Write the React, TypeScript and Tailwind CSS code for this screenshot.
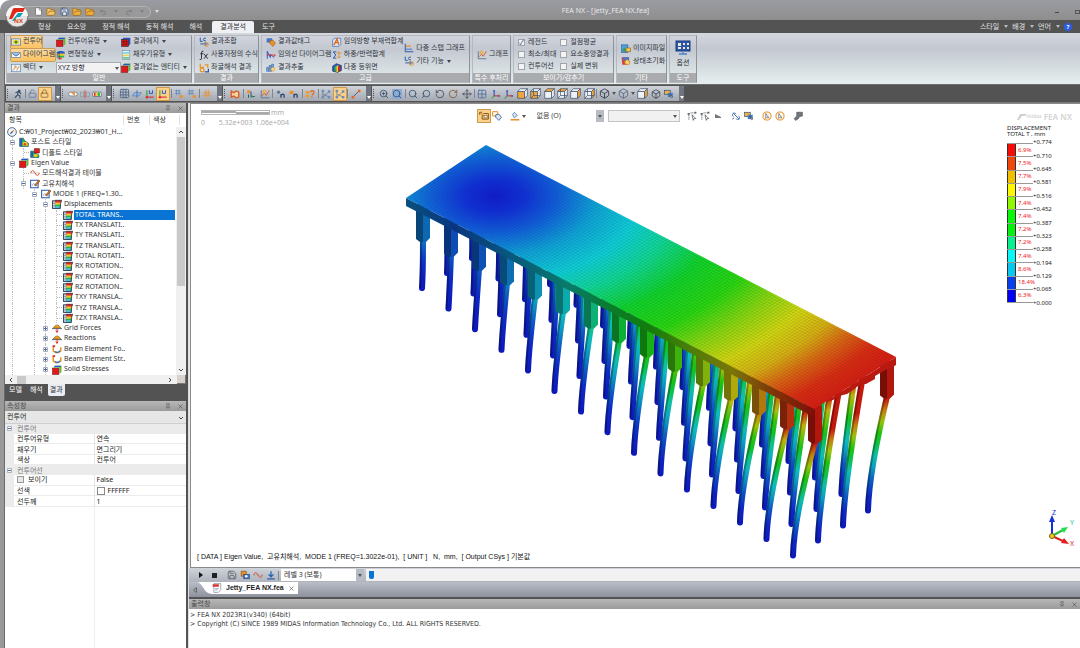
import type { ReactNode } from "react";
import {
  Box,
  File,
  FolderOpen,
  Grid2x2,
  Grid3x3,
  Hash,
  Lock,
  LockOpen,
  Move,
  Pin,
  Redo2,
  RotateCcw,
  RotateCw,
  Save,
  Search,
  Undo2,
  X,
  ZoomIn,
} from "lucide-react";

const INK = "#33506f";
const ORANGE = "#e8912a";

const glyphs: Record<string, ReactNode> = {
  contour: (
    <>
      <rect x="1" y="3" width="14" height="10" fill="#dfe9f5" stroke="#3c6aa0" />
      <ellipse cx="8" cy="8" rx="5" ry="3.5" fill="#f3d21c" />
      <circle cx="8" cy="8" r="2.2" fill="#1d8a36" />
    </>
  ),
  diagram: (
    <>
      <path d="M1 4h14v8H1z" fill="#fff" stroke="#3c6aa0" />
      <path d="M2 5q6 9 12 0" fill="#8fb4e0" stroke="#24508a" />
    </>
  ),
  vector: (
    <>
      <rect x="1" y="2" width="14" height="12" fill="#eef4fb" stroke="#4c78ad" />
      <path d="M3 12 8 5m-3 0h3v3M9 12l4-7" stroke={ORANGE} strokeWidth="1.5" fill="none" />
    </>
  ),
  cube: (
    <>
      <path d="M5 1h10v10l-3 3V4H2z" fill="#2bb24a" />
      <path d="M5 1h10l-1 2H3z" fill="#2854c8" />
      <path d="M14 2h1v9l-1 1z" fill="#f2d21c" />
      <rect x="1" y="5" width="10" height="10" fill="#e01818" stroke="#801010" />
    </>
  ),
  edgeCube: (
    <>
      <path d="M4 1h11v10l-3 3V4H1z" fill="#2854c8" />
      <rect x="1" y="4" width="11" height="11" fill="#e01818" stroke="#1d2b44" />
      <path d="M4.500 4v11M8.500 4v11M1 7.500h11M1 11.500h11" stroke="#701010" />
    </>
  ),
  isoCube: (
    <>
      <path d="m1 5 6-4 8 3v8l-6 3-8-2z" fill="#2854c8" stroke="#1d2b44" />
      <path d="m4 6 3-2v10l-3-1z" fill="#2bb24a" />
      <path d="m7 5 3-2v11l-3 1z" fill="#f2d21c" />
      <path d="m10 6 3-2v8l-3 2z" fill="#e01818" />
    </>
  ),
  deform: (
    <>
      <path d="M2 3q6-3 12 0v3H2z" fill="#2854c8" />
      <path d="M2 6h12v3H3z" fill="#f2c41c" />
      <path d="M3 9h10v3H4z" fill="#2bb24a" />
      <path d="M4 12h5v3H4z" fill="#e04818" />
      <path d="M2 3v10M5 2v12" stroke="#1d2b44" fill="none" />
    </>
  ),
  layers: (
    <>
      <rect x="1" y="3" width="12" height="12" fill="#e8eef6" stroke="#1d3454" strokeWidth="1.600" />
      <path d="M2 7h4M2 11h4M5 4v10" stroke="#4c6488" />
      <path d="M5 2h11l-2 4H5z" fill="#e02818" />
      <path d="M5 6h9l-1 3H5z" fill="#f2c81c" />
      <path d="M5 9h8v3H5z" fill="#2bb24a" />
      <path d="M5 12h8v2H5z" fill="#18b8c8" />
      <path d="M5 2h11l-2 4-1 9" stroke="#1d3454" fill="none" />
    </>
  ),
  fill: (
    <>
      <rect x="2" y="1" width="12" height="14" fill="#fff" stroke="#6888a8" />
      <path d="M3 3h10v3H3z" fill="#72d6e8" />
      <path d="M3 7h10v3H3z" fill="#f4d060" />
      <path d="M3 11h10v3H3z" fill="#60c890" />
    </>
  ),
  loadCase: (
    <>
      <path d="M2 1v6h4M11 2q-4-1-4 2t4 2" stroke="#2854a8" strokeWidth="1.5" fill="none" />
      <path d="M2 11h12M10 8v6" stroke="#4d78b4" strokeWidth="2" />
      <circle cx="12" cy="12" r="3" fill="none" stroke={ORANGE} strokeWidth="1.5" />
    </>
  ),
  fx: (
    <path d="M7 2Q4 1 4 5v9q0 2-3 1M2 6h5M8 6l6 8M14 6 8 14" stroke="#2a3038" strokeWidth="1.5" fill="none" />
  ),
  coord: (
    <>
      <path d="M2 1v6h6M9 3h5v5" stroke={ORANGE} strokeWidth="2" fill="none" />
      <circle cx="5" cy="11" r="3" fill="none" stroke={ORANGE} strokeWidth="2" />
      <path d="M9 14h6V9" stroke="#2854a8" strokeWidth="2" fill="none" />
    </>
  ),
  tag: (
    <>
      <path d="M1 2h9v7H1z" fill="#4176c8" />
      <path d="m6 6 5-1 4 5-4 5-5-5z" fill={ORANGE} stroke="#a45c10" />
    </>
  ),
  pick: (
    <>
      <path d="M1 1h8v7H1z" fill="#fff8ec" stroke={ORANGE} strokeWidth="1.600" />
      <path d="m6 6 5-1 4 5-4 5-5-5z" fill="#dce8f6" stroke="#3c64a0" strokeWidth="1.400" />
    </>
  ),
  lineDiagram: (
    <>
      <path d="M2 14V2l5 10V7l6 5" stroke="#2854c8" strokeWidth="1.5" fill="none" />
      <path d="M1 8h14l-3 3" stroke="#d83030" strokeWidth="1.5" fill="none" />
    </>
  ),
  extract: (
    <>
      <path d="M1 14V7h3v7M5 14V4h3v10M9 14V2h3v7" fill="#7ea4d8" stroke="#3a66a8" />
      <circle cx="11" cy="10" r="3" fill="#f8d890" stroke={ORANGE} />
    </>
  ),
  direction: (
    <>
      <path d="M4 2h10v10l-3 3H1V5z" fill="#dbe8f8" stroke="#2854a8" />
      <path d="M3 13 8 3l3 10M5 9h6" stroke="#d86818" strokeWidth="2" fill="none" />
    </>
  ),
  sigma: (
    <>
      <path d="M7 3H2l4 5-4 5h5" stroke="#2854a8" strokeWidth="1.5" fill="none" />
      <path d="M8 5h7M11 2v11M9 10l2 3 3-3" stroke={ORANGE} strokeWidth="1.5" fill="none" />
    </>
  ),
  stepGraph: (
    <>
      <path d="M2 1v13h13" stroke="#2854a8" strokeWidth="1.5" fill="none" />
      <path d="M3 4h8v2H3z" fill={ORANGE} />
      <path d="M3 9h10v2H3z" fill="#5888d0" />
    </>
  ),
  graph: (
    <>
      <path d="M2 2v12h13" stroke="#5d7796" strokeWidth="1.5" fill="none" />
      <path d="m3 11 4-4 3 3 5-8" stroke="#d85820" strokeWidth="1.5" fill="none" />
      <circle cx="7" cy="4" r="2.5" fill="#f0c060" stroke={ORANGE} />
    </>
  ),
  image: (
    <>
      <rect x="1" y="3" width="10" height="12" fill="#4ba3d8" stroke="#2854a8" />
      <path d="m2 13 3-6 4 6z" fill="#2ba048" />
      <rect x="8" y="8" width="7" height="6" fill="#f2c850" stroke="#906010" />
    </>
  ),
  reset: (
    <>
      <path d="M1 2h12l-3 12H2z" fill="#d84040" />
      <path d="M3 2h10v5H3z" fill="#4878c8" />
      <circle cx="10" cy="10" r="4" fill="#f8c860" stroke="#b87010" />
      <path d="m8 8 4 4" stroke="#fff" />
    </>
  ),
  monitor: (
    <>
      <rect x="1" y="1" width="14" height="10" fill="#2a58b0" stroke="#1d3c78" />
      <path d="M3 3h3v3H3zM8 3h2v2H8zM12 3h2v2h-2zM3 7h3v2H3zM8 7h2v2H8zM12 7h2v2h-2z" fill="#f4e8c8" />
      <path d="M7 11h2v2h3v2H4v-2h3z" fill="#6c90c8" />
    </>
  ),
  walker: (
    <path d="M9 2h2v2H9zM4 6l4-2 3 2 2 2M8 5 7 10l-4 4M7 9l4 2v4" stroke="#38506c" strokeWidth="1.7" fill="none" />
  ),
  barOrange: (
    <>
      <rect x="1" y="5" width="14" height="6" rx="3" fill="#fff" stroke="#5a6470" />
      <path d="M4 5h7v6z" fill={ORANGE} />
    </>
  ),
  barSplit: (
    <>
      <rect x="1" y="5" width="5" height="7" fill="none" stroke="#8b9098" />
      <rect x="10" y="5" width="5" height="7" fill="none" stroke="#8b9098" />
      <path d="M8 2v13" stroke="#d84040" strokeWidth="1.5" />
    </>
  ),
  barRainbow: (
    <>
      <rect x="1" y="5" width="14" height="7" rx="2" fill="#fff" stroke="#3c4c60" />
      <path d="M3 6h3v5H3z" fill="#e03020" />
      <path d="M6 6h3v5H6z" fill="#f2d21c" />
      <path d="M9 6h4v5H9z" fill="#30b040" />
    </>
  ),
  plane: (
    <>
      <path d="M4 6h11l-4 5H1z" fill="#9cc0e8" stroke="#4470a8" />
      <path d="M8 2v12" stroke="#4470a8" strokeWidth="1.5" />
    </>
  ),
  axes: (
    <>
      <path d="M3 2v10" stroke="#30a848" strokeWidth="1.8" fill="none" />
      <path d="M3 13h11" stroke="#d83030" strokeWidth="1.8" />
      <path d="M7 2v5h5V2" stroke="#2854c8" strokeWidth="1.5" fill="none" />
      <circle cx="3" cy="13" r="2" fill="#d83030" />
    </>
  ),
  triad: (
    <>
      <path d="M5 2v9" stroke="#2854c8" strokeWidth="1.8" />
      <path d="M5 11h9" stroke="#d83030" strokeWidth="1.8" />
      <path d="m5 11-4 4" stroke="#30a848" strokeWidth="1.8" />
      <path d="m3 4 2-3 2 3zM12 9l3 2-3 2z" fill="#3c5c98" />
    </>
  ),
  gridLines: (
    <>
      <path d="M1 3h10M1 7h10M4 1v9M8 1v9" stroke="#5f87bd" strokeWidth="1.2" />
      <path d="M9 10h5v4H9z" fill={ORANGE} />
    </>
  ),
  shape: (
    <path d="m2 3 4 3 4-3 4 2v8l-4 1-4-3-4 2z" fill="#f6cfa4" stroke="#d85818" strokeWidth="2" />
  ),
  nodePick: (
    <>
      <rect x="2" y="2" width="5" height="5" fill={ORANGE} />
      <path d="M8 4v8h6M4 9v5" stroke="#30508c" strokeWidth="1.6" fill="none" />
      <circle cx="9" cy="12" r="2" fill="#30a040" />
    </>
  ),
  numberN: (
    <>
      <circle cx="4" cy="5" r="2.6" fill="#5d7796" />
      <path d="M8 14V8m0 2q4-4 5 0v4" stroke="#24416e" strokeWidth="2" fill="none" />
    </>
  ),
  elementN: (
    <>
      <path d="M1 3h6v5H1z" fill={ORANGE} />
      <path d="M8 14V8m0 2q4-4 5 0v4" stroke="#24416e" strokeWidth="2" fill="none" />
    </>
  ),
  query: (
    <>
      <path d="M1 3h6v4H1zM1 9h6v4H1z" fill="#ef9a2c" />
      <path d="M9 5q1-3 4-2t0 5l-2 2M11 12v2" stroke="#d8681c" strokeWidth="2" fill="none" />
    </>
  ),
  network: (
    <>
      <path d="M3 3v10l10-9M3 8l10 5" stroke="#4f6f98" fill="none" />
      <path d="M1 1h4v4H1zM1 11h4v4H1zM11 2h4v4h-4zM11 11h4v4h-4z" fill="#6d8eb8" />
    </>
  ),
  line: (
    <>
      <path d="M3 13 13 3" stroke="#4a5c78" strokeWidth="1.5" />
      <path d="M1 11h4v4H1zM11 1h4v4h-4z" fill="#e06820" />
    </>
  ),
  cursor: (
    <>
      <path d="M3 14V5l3-2h8" stroke="#5c6068" strokeWidth="1.4" strokeDasharray="2 1" fill="none" />
      <path d="M1 3h3v3H1zM12 1h3v3h-3z" fill="#5c6068" />
      <path d="m8 6 6 6-3 .3L10 15z" fill="#fff" stroke="#34383e" />
    </>
  ),
  circleCursor: (
    <>
      <circle cx="8" cy="8" r="6.5" fill="#fff4e4" stroke={ORANGE} strokeWidth="1.6" />
      <path d="M6 4v8l2-2 3 1z" fill="#fff" stroke="#4a5668" />
    </>
  ),
  links: (
    <path d="m3 3 10 10M4 9a3 3 0 1 1 4-4M8 12a3 3 0 1 0 4-4M2 13l3-2" stroke="#3f6ca8" strokeWidth="1.6" fill="none" />
  ),
  frames: (
    <>
      <rect x="1" y="2" width="9" height="7" fill="#f0b040" stroke="#24487c" />
      <path d="M6 6h8v7H6z" fill="#4878c8" />
      <path d="m9 8 5 5-2 1z" fill="#fff" stroke="#333" />
    </>
  ),
  brush: <path d="M6 2h9v6l-5 1-1 3-5 3-2-3 4-4z" fill="#73777c" stroke="#4c4f53" />,
  pour: (
    <>
      <path d="m7 2 5 5-5 4-3-5z" fill="#cfe0f4" stroke="#30609c" />
      <path d="M1 14h14" stroke={ORANGE} strokeWidth="2.5" />
    </>
  ),
  selectBox: (
    <>
      <path d="M1 2h4M1 2v4M7 4h8v9H5V7" fill="none" stroke="#8a5818" strokeWidth="1.600" />
      <rect x="8" y="7" width="5" height="4" fill="#fff" stroke="#6c5028" />
      <path d="m2 3 6 5" stroke="#b46c18" strokeWidth="1.600" />
    </>
  ),
  record: (
    <>
      <path d="M2 2h8v8H2z" fill={ORANGE} stroke="#7c4c10" />
      <rect x="6" y="7" width="9" height="7" fill="#4878c8" stroke="#24487c" />
      <circle cx="10" cy="10" r="2" fill="#fff" />
    </>
  ),
  wave: (
    <>
      <path d="M0 8h16" stroke="#a0a4ac" />
      <path d="M1 8q3-8 7 0t7 0" stroke="#e05030" strokeWidth="1.6" fill="none" />
    </>
  ),
  download: <path d="M8 2v8M4 7l4 4 4-4M2 14h12" stroke="#2460b0" strokeWidth="2" fill="none" />,
  doc: (
    <>
      <path d="M3 1h11v10l-4 4H3z" fill="#fff" stroke="#6d7887" />
      <path d="M1 2h10v4H1z" fill="#d83838" />
      <path d="M5 9h6M5 11h4" stroke="#6d88a8" />
    </>
  ),
  compass: (
    <>
      <circle cx="8" cy="8" r="7" fill="#eef4fa" stroke="#43617f" strokeWidth="1.4" />
      <path d="m12 4-3 5-2-2z" fill="#e07020" />
      <path d="m4 12 3-5 2 2z" fill="#2858a0" />
    </>
  ),
  style: (
    <>
      <path d="M1 2h6l2 4 6 4v5H1z" fill="#2bb24a" stroke="#1c3c70" />
      <path d="M2 3h3v11H2z" fill="#2854c8" />
      <path d="M6 8h6l2 3v3H6z" fill="#f2d21c" />
      <circle cx="9.500" cy="11.500" r="2" fill="#e04020" />
    </>
  ),
  styleDefault: (
    <>
      <path d="M1 5h5l2 3 6 3v4H1z" fill="#2bb24a" stroke="#1c3c70" />
      <path d="M2 6h3v8H2z" fill="#2854c8" />
      <path d="M6 10h6v4H6z" fill="#f2d21c" />
      <path d="M7 1h8v7H7z" fill="#e02020" stroke="#701010" />
    </>
  ),
  edit: (
    <>
      <rect x="1" y="2" width="12" height="12" fill="#fff" stroke="#2854a8" strokeWidth="1.6" />
      <path d="M3 11q3-6 5-2t4 1" stroke="#4878c8" fill="none" />
      <path d="m7 10 7-8 2 1-7 8z" fill="#e87818" stroke="#7c3c08" />
    </>
  ),
  force: (
    <>
      <path d="M2 8q6-10 12 0z" fill="#f2a81c" stroke="#7c5410" />
      <path d="M0 9h16" stroke="#485060" strokeWidth="1.4" />
      <path d="M8 9v6M6 12l2 3 2-3" stroke="#d83020" strokeWidth="1.5" fill="none" />
    </>
  ),
  beam: (
    <>
      <path d="M2 4v7q6 6 12 0V5" stroke={ORANGE} strokeWidth="2.4" fill="none" />
      <path d="M5 12q4 3 8-1" stroke="#2870c8" strokeWidth="2" fill="none" />
      <path d="M1 2h4v3H1z" fill="#d83020" />
    </>
  ),
};

function Glyph({ name, size = 10 }: { name: string; size?: number }) {
  return (
    <svg width={size} height={size} viewBox="0 0 16 16" className="shrink-0" aria-hidden="true">
      {glyphs[name]}
    </svg>
  );
}

function FaceCube({ face }: { face: number }) {
  const fills = ["#eef3fa", "#eef3fa", "#eef3fa"];
  fills[face % 3] = "#f0a83c";
  return (
    <svg width="11" height="11" viewBox="0 0 16 16" stroke="#3c4c68" aria-hidden="true">
      <path d="M1 5h10v10H1z" fill={fills[0]} />
      <path d="m1 5 4-4h10l-4 4z" fill={fills[1]} />
      <path d="m11 5 4-4v10l-4 4z" fill={fills[2]} />
      {face > 2 && <path d="M5 1v10L1 15M5 11h10" fill="none" />}
    </svg>
  );
}

const Caret = ({ className = "text-[#555]" }: { className?: string }) => (
  <svg width="4" height="3" viewBox="0 0 4 3" className={`shrink-0 ${className}`} aria-hidden="true">
    <path d="M0 0h4L2 3z" fill="currentColor" />
  </svg>
);

function RibbonItem({ icon, label, caret = false, active = false }) {
  return (
    <button
      className={`flex h-[12px] items-center gap-[2px] whitespace-nowrap ${
        active ? "rounded-[1px] bg-gradient-to-b from-[#fbd9a0] to-[#fbc25e] outline outline-[#c99d58]" : ""
      }`}
    >
      <Glyph name={icon} />
      {label}
      {caret && <Caret className="ml-px text-[#444]" />}
    </button>
  );
}

function RibbonGroup({ title, className, children }) {
  return (
    <section className={`flex shrink-0 flex-col border border-[#b4b8c0] border-r-[#8e929a] ${className}`}>
      <div className="flex min-h-0 flex-1 items-center px-1">{children}</div>
      <h2 className="h-[9px] bg-[#a9abae] text-center text-[7px] leading-[9px] text-white">{title}</h2>
    </section>
  );
}

function CheckItem({ label, checked = false }) {
  return (
    <label className="flex h-[12px] items-center gap-[3px] whitespace-nowrap">
      <input
        type="checkbox"
        defaultChecked={checked}
        className="flex size-[7px] appearance-none items-center justify-center border border-[#a0a4aa] bg-[#f4f4f4] text-[7px] leading-none text-[#2c4a88] checked:before:content-['✓']"
      />
      {label}
    </label>
  );
}

function Ribbon() {
  return (
    <div className="flex h-[52px] gap-[2px] border-b border-[#6c6c6c] bg-gradient-to-b from-[#d5d7de] via-[#c3c8d1] via-30% to-[#e6efee] pb-px pl-px pt-[2px] text-[7px] text-[#30343c]">
      <RibbonGroup title="일반" className="w-[186px]">
        <div className="flex w-[46px] flex-col items-start gap-[1px]">
          <RibbonItem icon="contour" label="컨투어" active />
          <RibbonItem icon="diagram" label="다이어그램" active />
          <RibbonItem icon="vector" label="벡터" caret />
        </div>
        <div className="flex w-[67px] flex-col items-start gap-[1px]">
          <RibbonItem icon="cube" label="컨투어유형" caret />
          <RibbonItem icon="deform" label="변형형상" caret />
          <div className="relative w-[65px]">
            <select aria-label="방향" className="block h-[12px] w-full appearance-none border border-[#a8acb4] bg-[#f2f2f2] pl-px text-[7px] leading-[10px]">
              <option>XYZ 방향</option>
            </select>
            <span className="pointer-events-none absolute right-[2px] top-[5px]">
              <Caret />
            </span>
          </div>
        </div>
        <div className="flex flex-col items-start gap-[1px]">
          <RibbonItem icon="edgeCube" label="결과에지" caret />
          <RibbonItem icon="fill" label="채우기유형" caret />
          <RibbonItem icon="cube" label="결과없는 엔티티" caret />
        </div>
      </RibbonGroup>
      <RibbonGroup title="결과" className="w-[65px]">
        <div className="flex flex-col items-start gap-[1px]">
          <RibbonItem icon="loadCase" label="결과조합" />
          <RibbonItem icon="fx" label="사용자정의 수식" />
          <RibbonItem icon="coord" label="좌굴해석 결과" />
        </div>
      </RibbonGroup>
      <RibbonGroup title="고급" className="w-[209px]">
        <div className="flex w-[67px] flex-col items-start gap-[1px]">
          <RibbonItem icon="tag" label="결과값태그" />
          <RibbonItem icon="lineDiagram" label="임의선 다이어그램" />
          <RibbonItem icon="extract" label="결과추출" />
        </div>
        <div className="flex w-[74px] flex-col items-start gap-[1px]">
          <RibbonItem icon="direction" label="임의방향 부재력합계" />
          <RibbonItem icon="sigma" label="하중/반력합계" />
          <RibbonItem icon="isoCube" label="다중 등위면" />
        </div>
        <div className="flex flex-col items-start gap-[1px]">
          <RibbonItem icon="stepGraph" label="다중 스텝 그래프" />
          <RibbonItem icon="loadCase" label="기타 기능" caret />
        </div>
      </RibbonGroup>
      <RibbonGroup title="특수 후처리" className="w-[39px]">
        <RibbonItem icon="graph" label="그래프" />
      </RibbonGroup>
      <RibbonGroup title="보이기/감추기" className="w-[101px]">
        <div className="flex w-[43px] flex-col">
          <CheckItem label="레전드" checked />
          <CheckItem label="최소/최대" />
          <CheckItem label="컨투어선" />
        </div>
        <div className="flex flex-col">
          <CheckItem label="절점평균" />
          <CheckItem label="요소중앙결과" />
          <CheckItem label="실제 변위" />
        </div>
      </RibbonGroup>
      <RibbonGroup title="기타" className="w-[51px]">
        <div className="flex flex-col items-start gap-[1px]">
          <RibbonItem icon="image" label="이미지파일" />
          <RibbonItem icon="reset" label="상태초기화" />
        </div>
      </RibbonGroup>
      <RibbonGroup title="도구" className="w-[28px]">
        <button className="flex flex-1 flex-col items-center gap-[2px]">
          <Glyph name="monitor" size={16} />
          옵션
        </button>
      </RibbonGroup>
    </div>
  );
}

const Sep = () => <span className="h-[9px] w-px shrink-0 bg-[#7f858e]" />;

function Tool({ children, active = false, name }) {
  return (
    <button
      aria-label={name}
      className={`flex size-[12px] shrink-0 items-center justify-center ${
        active ? "bg-[#fbd08a] outline outline-[#cf9a48]" : ""
      }`}
    >
      {children}
    </button>
  );
}

function Strip({ className, children }) {
  return (
    <div className={`flex h-[15px] shrink-0 rounded-r-[2px] bg-gradient-to-b from-[#cfd3da] to-[#a3a8b1] ${className}`}>
      <span className="my-[3px] ml-px border-l border-dotted border-[#50555e]" />
      <div className="flex min-w-0 flex-1 items-center justify-between px-1">{children}</div>
      <span className="flex w-[5px] items-end justify-center rounded-r-[2px] bg-[#6f757f] pb-[2px]">
        <Caret className="text-white" />
      </span>
    </div>
  );
}

function ToolStrips() {
  return (
    <div className="flex h-[18px] items-center gap-px border-b border-[#777] bg-[#535353] pl-px">
      <Strip className="w-[54px]">
        <Tool name="실행"><Glyph name="walker" /></Tool>
        <Sep />
        <Tool name="잠금 해제"><LockOpen size={9} color="#5e7797" /></Tool>
        <Tool name="잠금" active><Lock size={9} color="#846028" /></Tool>
      </Strip>
      <Strip className="w-[50px]">
        <Tool name="범위"><Glyph name="barOrange" /></Tool>
        <Tool name="분할"><Glyph name="barSplit" /></Tool>
        <Tool name="색상"><Glyph name="barRainbow" /></Tool>
      </Strip>
      <Strip className="w-[110px]">
        <Tool name="격자"><Grid3x3 size={11} color="#52688a" /></Tool>
        <Tool name="평면"><Glyph name="plane" /></Tool>
        <Tool name="좌표축"><Glyph name="axes" /></Tool>
        <Tool name="요소좌표" active><Glyph name="axes" /></Tool>
        <Sep />
        <Tool name="격자선"><Glyph name="gridLines" /></Tool>
        <Tool name="격자점"><Glyph name="gridLines" /></Tool>
        <Sep />
        <Tool name="스냅"><Hash size={10} color="#e8912a" /></Tool>
      </Strip>
      <Strip className="w-[148px]">
        <Tool name="형상"><Glyph name="shape" /></Tool>
        <Sep />
        <Tool name="절점"><Glyph name="nodePick" /></Tool>
        <Tool name="그래프"><Glyph name="graph" /></Tool>
        <Sep />
        <Tool name="절점번호"><Glyph name="numberN" /></Tool>
        <Tool name="요소번호"><Glyph name="elementN" /></Tool>
        <Sep />
        <Tool name="조회"><Glyph name="query" /></Tool>
        <Sep />
        <Tool name="연결"><Glyph name="network" /></Tool>
        <Tool name="프레임" active><Glyph name="network" /></Tool>
        <Sep />
        <Tool name="거리"><Glyph name="line" /></Tool>
      </Strip>
      <Strip className="w-[312px]">
        <Tool name="확대"><ZoomIn size={10} color={INK} /></Tool>
        <Tool name="전체보기"><span className="bg-[#8cacd8]"><Search size={10} color={INK} /></span></Tool>
        <Sep />
        <Tool name="창 확대"><Search size={10} color={INK} /></Tool>
        <Tool name="동적 확대"><Search size={10} color={INK} className="-scale-x-100" /></Tool>
        <Tool name="왼쪽 회전"><RotateCcw size={10} color="#454c56" /></Tool>
        <Tool name="오른쪽 회전"><RotateCw size={10} color="#7a5a34" /></Tool>
        <Tool name="이동"><Move size={10} color="#454c56" /></Tool>
        <Sep />
        <Tool name="뷰 격자"><Grid2x2 size={10} color="#4a6c9c" /></Tool>
        <Tool name="XY 축"><Glyph name="triad" /></Tool>
        <Tool name="YZ 축"><Glyph name="triad" /></Tool>
        {[0, 3, 1, 4, 2, 5].map((face) => (
          <Tool key={face} name={`뷰 ${face}`}><FaceCube face={face} /></Tool>
        ))}
        <Sep />
        <Tool name="등각"><Box size={11} color="#3a4450" /></Tool>
        <Caret />
        <Tool name="투시"><Box size={11} color="#62708a" strokeDasharray="3 1" /></Tool>
        <Caret />
        <Tool name="절단면"><FaceCube face={2} /></Tool>
        <Tool name="회전 중심"><Box size={10} color="#3a4450" /></Tool>
        <Tool name="화면 맞춤"><Glyph name="frames" /></Tool>
      </Strip>
    </div>
  );
}

const tree = [
  { level: 0, icon: "compass", label: "C:₩01_Project₩02_2023₩01_H...", guides: [] },
  { level: 1, icon: "style", label: "포스트 스타일", box: "-", guides: [1] },
  { level: 2, icon: "styleDefault", label: "디폴트 스타일", guides: [1, 2] },
  { level: 1, icon: "cube", label: "Eigen Value", box: "-", guides: [1] },
  { level: 2, icon: "wave", label: "모드해석결과 테이블", guides: [1, 2] },
  { level: 2, icon: "edit", label: "고유치해석", box: "-", guides: [1, 2] },
  { level: 3, icon: "edit", label: "MODE 1 (FREQ=1.30..", box: "-", guides: [1, 3] },
  { level: 4, icon: "layers", label: "Displacements", box: "-", guides: [1, 3, 4] },
  ...[
    "TOTAL TRANS..",
    "TX TRANSLATI..",
    "TY TRANSLATI..",
    "TZ TRANSLATI..",
    "TOTAL ROTATI..",
    "RX ROTATION..",
    "RY ROTATION..",
    "RZ ROTATION..",
    "TXY TRANSLA..",
    "TYZ TRANSLA..",
    "TZX TRANSLA..",
  ].map((label, i) => ({ level: 5, icon: "layers", label, guides: [1, 3, 4, 5], selected: i === 0 })),
  { level: 4, icon: "force", label: "Grid Forces", box: "+", guides: [1, 3, 4] },
  { level: 4, icon: "force", label: "Reactions", box: "+", guides: [1, 3, 4] },
  { level: 4, icon: "beam", label: "Beam Element Fo..", box: "+", guides: [1, 3, 4] },
  { level: 4, icon: "beam", label: "Beam Element Str..", box: "+", guides: [1, 3, 4] },
  { level: 4, icon: "cube", label: "Solid Stresses", box: "+", guides: [1, 3, 4] },
];

function ExpandBox({ sign }: { sign: string }) {
  return (
    <svg width="5" height="5" viewBox="0 0 5 5" aria-hidden="true">
      <path d="M.5.5h4v4h-4z" fill="#fff" stroke="#a8b0ba" />
      <path d={sign === "+" ? "M1 2.5h3M2.5 1v3" : "M1 2.5h3"} stroke="#5068a8" />
    </svg>
  );
}

function PaneHeader({ title }: { title: string }) {
  return (
    <div className="flex h-[10px] shrink-0 items-center gap-[6px] bg-gradient-to-b from-[#b8b8b8] to-[#9b9b9b] px-[2px] text-[7px] text-[#4c4c4c]">
      <h2 className="flex-1 leading-[10px]">{title}</h2>
      <button aria-label="고정"><Pin size={6} /></button>
      <button aria-label="닫기"><X size={7} /></button>
    </div>
  );
}

const Arrow = ({ d }: { d: string }) => (
  <svg width="6" height="6" viewBox="0 0 6 6" fill="none" stroke="#444" aria-hidden="true">
    <path d={d} />
  </svg>
);

function ResultTree() {
  return (
    <section className="flex flex-col bg-white">
      <PaneHeader title="결과" />
      <div className="flex h-[14px] items-center text-[7px] text-[#333]">
        <span className="flex-1 pl-1">항목</span>
        <span className="w-[26px] border-l border-[#e2e2e2] pl-[3px]">번호</span>
        <span className="w-[31px] border-x border-[#e2e2e2] pl-[3px]">색상</span>
        <span className="w-[6px]" />
      </div>
      <div className="flex h-[248px]">
        <ul className="flex min-w-0 flex-1 flex-col text-[7px] text-[#333]">
          {tree.map((row) => (
            <li
              key={row.label}
              className="relative flex min-h-0 flex-1 items-center"
              style={{ paddingLeft: row.level ? row.level * 11 - 7 : 2 }}
            >
              {row.guides.map((g) => (
                <span
                  key={g}
                  className="absolute inset-y-0 border-l border-dotted border-[#c0c0c0]"
                  style={{ left: g * 11 - 4 }}
                />
              ))}
              {row.level > 0 && (
                <span className="relative flex w-[10px] shrink-0 items-center pl-px">
                  {row.box ? <ExpandBox sign={row.box} /> : <span className="ml-[3px] w-[5px] border-t border-dotted border-[#b4b4b4]" />}
                </span>
              )}
              <Glyph name={row.icon} />
              <span
                className={`ml-px flex h-full flex-1 items-center whitespace-nowrap pl-px ${
                  row.selected ? "bg-[#0a74d4] text-white" : ""
                }`}
              >
                {row.label}
              </span>
            </li>
          ))}
        </ul>
        <div className="ml-px flex w-[10px] flex-col items-center bg-[#f0f0f0]">
          <span className="flex h-[10px] items-center"><Arrow d="m1 4 2-2 2 2" /></span>
          <span className="h-[149px] w-[8px] bg-[#c9c9c9]" />
          <span className="mt-auto flex h-[10px] items-center"><Arrow d="m1 2 2 2 2-2" /></span>
        </div>
      </div>
      <div className="flex h-[9px] items-center bg-[#f0f0f0] pl-[3px]">
        <Arrow d="M4 1 2 3l2 2" />
        <span className="ml-[3px] h-[8px] w-[9px] bg-[#c9c9c9]" />
        <span className="ml-auto mr-1"><Arrow d="m2 1 2 2-2 2" /></span>
        <span className="size-[9px] border-b border-r border-[#777] bg-[#d9d2ca]" />
      </div>
    </section>
  );
}

const properties = [
  { head: "컨투어" },
  { name: "컨투어유형", value: "연속" },
  { name: "채우기", value: "면그리기" },
  { name: "색상", value: "컨투어" },
  { head: "컨투어선" },
  { name: "보이기", value: "False", check: true },
  { name: "선색", value: "FFFFFF", swatch: true },
  { name: "선두께", value: "1" },
];

function Properties() {
  return (
    <section className="mt-[2px] flex min-h-0 flex-1 flex-col bg-white text-[7px] text-[#222]">
      <PaneHeader title="속성창" />
      <div className="relative">
        <select aria-label="속성" className="block h-[13px] w-full appearance-none border-b border-[#cfcfcf] bg-[#e6e6e6] pl-[2px] text-[7px]">
          <option>컨투어</option>
        </select>
        <span className="pointer-events-none absolute right-[2px] top-[4px]"><Arrow d="m1 2 2 2 2-2" /></span>
      </div>
      <table className="h-[83px] w-full table-fixed border-collapse leading-[9px]">
        <colgroup>
          <col className="w-[9px]" />
          <col className="w-[80px]" />
          <col />
        </colgroup>
        <tbody>
          {properties.map((row) =>
            row.head ? (
              <tr key={row.head + "head"} className="bg-[#ebebeb] text-[#777]">
                <td className="p-0 pl-[2px]"><ExpandBox sign="-" /></td>
                <td colSpan={2} className="p-0 pl-[3px]">{row.head}</td>
              </tr>
            ) : (
              <tr key={row.name} className="border-b border-[#ececec]">
                <td className="bg-[#ebebeb] p-0" />
                <td className="border-r border-[#e4e4e4] p-0 pl-[3px]">
                  {row.check ? (
                    <label className="flex items-center gap-[4px]">
                      <input type="checkbox" className="size-[7px] appearance-none border border-[#999] bg-[#e8e8e8]" />
                      {row.name}
                    </label>
                  ) : (
                    row.name
                  )}
                </td>
                <td className="p-0 pl-[2px]">
                  <span className="flex items-center gap-[3px]">
                    {row.swatch && <span className="size-[8px] border border-[#888] bg-white" />}
                    {row.value}
                  </span>
                </td>
              </tr>
            ),
          )}
        </tbody>
      </table>
      <div className="ml-[89px] flex-1 border-l border-[#efefef]" />
    </section>
  );
}

// rainbow ramp, 0 = no displacement, 1 = maximum
const ramp = [
  [0, 16, 28, 208],
  [0.06, 16, 48, 218],
  [0.13, 16, 96, 220],
  [0.21, 14, 164, 216],
  [0.3, 14, 208, 216],
  [0.38, 16, 216, 150],
  [0.48, 16, 212, 40],
  [0.58, 40, 216, 14],
  [0.67, 140, 216, 14],
  [0.75, 212, 216, 14],
  [0.82, 216, 176, 16],
  [0.88, 220, 100, 16],
  [0.94, 220, 44, 16],
  [1, 216, 28, 16],
];

function colorAt(value: number, shade = 1) {
  const v = Math.min(1, Math.max(0, value));
  const k = Math.max(1, ramp.findIndex((stop) => stop[0] >= v));
  const a = ramp[k - 1];
  const b = ramp[k];
  const f = (v - a[0]) / (b[0] - a[0]);
  const c = [1, 2, 3].map((n) => Math.round((a[n] + (b[n] - a[n]) * f) * shade));
  return `rgb(${c.join(",")})`;
}

// displacement along the deck, u runs from 0 to 1 over its length
const deckValue = (u: number) => Math.hypot(u - 0.118, 0.11) / 0.888;

const piles = [3, 2, 1, 0].flatMap((row) =>
  Array.from({ length: 15 }, (_, i) => {
    const foot = i < 10 ? 291 + 20.6 * i : 476 + 16.5 * (i - 9);
    return {
      id: `pile-${row}-${i}`,
      row,
      last: i === 14,
      x: 422 + 28 * i + 24 * row,
      y: 242 + 14.4 * i - 15 * row,
      footX: 421 + 26.5 * i + 25 * row,
      footY: foot - 15 * row,
      value: deckValue(0.02 + i * 0.07),
    };
  }),
);

function Pile({ pile }) {
  const { id, row, last, x, y, footX, footY, value } = pile;
  const capped = row === 0 || (row === 3 && last);
  const start = capped ? y - 2 : y - 38;
  const d = `M${x} ${start}Q${footX + 1} ${footY - (footY - y) * 0.36} ${footX} ${footY - 3}`;
  const capTop = y - 38;
  return (
    <g>
      <linearGradient id={id} gradientUnits="userSpaceOnUse" x1="0" x2="0" y1={y} y2={footY}>
        {[0, 0.1, 0.2, 0.3, 0.4, 0.5, 0.6, 0.7, 0.85, 1].map((t) => (
          <stop key={t} offset={t} stopColor={colorAt(value * (1 - t) ** 1.6, 0.9)} />
        ))}
      </linearGradient>
      <path d={d} stroke={`url(#${id})`} strokeWidth="6" strokeLinecap="round" fill="none" />
      <path d={d} stroke="#000" strokeOpacity=".3" strokeWidth="2" fill="none" transform="translate(-2 0)" />
      {capped && (
        <>
          <path d={`M${x - 7} ${capTop}h7v38h-3l-4-3z`} fill={colorAt(value, 0.55)} />
          <path d={`M${x} ${capTop}h7v34l-4 4h-3z`} fill={colorAt(value, 0.82)} />
        </>
      )}
    </g>
  );
}

function JettyModel() {
  return (
    <svg className="absolute left-0 top-0" width="720" height="462" viewBox="190 104 720 462" role="img" aria-label="Jetty displacement contour">
      <defs>
        <radialGradient
          id="deck"
          gradientUnits="userSpaceOnUse"
          cx="0"
          cy="0"
          r="0.888"
          gradientTransform="matrix(408 211 364 -241 494 196)"
        >
          {ramp.map(([at, r, g, b]) => (
            <stop key={at} offset={at} stopColor={`rgb(${r},${g},${b})`} />
          ))}
        </radialGradient>
        <linearGradient id="side" gradientUnits="userSpaceOnUse" x1="405" x2="813" y1="0" y2="0">
          {[0, 0.12, 0.25, 0.4, 0.5, 0.6, 0.7, 0.8, 0.9, 1].map((u) => (
            <stop key={u} offset={u} stopColor={colorAt(deckValue(u), 0.58)} />
          ))}
        </linearGradient>
        <pattern id="mesh" width="3" height="3" patternUnits="userSpaceOnUse" patternTransform="matrix(.888 .459 .83 -.55 405 198)">
          <path d="M0 0h3M0 0v3" stroke="#123" strokeOpacity=".3" strokeWidth=".7" />
        </pattern>
      </defs>
      {piles.map((pile) => (
        <Pile key={pile.id} pile={pile} />
      ))}
      <path d="M813 409 895 357v8l-5 3-4 1-12 7v3l-9 5-5 0-14 10-8 2-6 4-8 2-11 8z" fill="#b81a12" />
      <path d="M405 198 813 409v8L405 206z" fill="url(#side)" />
      <path d="M485 145 895 357 813 409 405 198z" fill="url(#deck)" />
      <path d="M485 145 895 357 813 409 405 198z" fill="url(#mesh)" />
    </svg>
  );
}

const legend = [
  ["#f80c08", "6.9%"],
  ["#f04808", "7.5%"],
  ["#f0c000", "7.7%"],
  ["#fff800", "7.9%"],
  ["#90f800", "7.4%"],
  ["#08f808", "7.4%"],
  ["#08f010", "7.2%"],
  ["#08f090", "7.2%"],
  ["#08f8f8", "7.4%"],
  ["#08c8f0", "8.6%"],
  ["#0840f0", "18.4%"],
  ["#0000f8", "6.3%"],
];
const levels = [0.774, 0.71, 0.645, 0.581, 0.516, 0.452, 0.387, 0.323, 0.258, 0.194, 0.129, 0.065, 0];

function Legend() {
  return (
    <div className="absolute right-[8px] top-[21px] w-[65px] text-[6px] text-[#222]">
      <p className="leading-[6px]">DISPLACEMENT</p>
      <p className="leading-[6px]">TOTAL T , mm</p>
      <div className="mt-[6px] flex h-[160px]">
        <ul className="flex w-[26px] flex-col border-t border-[#999]">
          {legend.map(([color, share]) => (
            <li key={color} className="flex flex-1 items-center border-b border-[#999] text-[#f02020]">
              <span className="mr-[2px] h-full w-[9px] shrink-0 border-x border-[#333]" style={{ backgroundColor: color }} />
              {share}
            </li>
          ))}
        </ul>
        <ul className="-my-[7px] flex flex-col text-[6px]">
          {levels.map((level) => (
            <li key={level} className="flex flex-1 items-center">+{level.toFixed(3)}</li>
          ))}
        </ul>
      </div>
    </div>
  );
}

function AxisTriad() {
  return (
    <svg className="absolute bottom-[16px] right-px" width="36" height="48" viewBox="0 -6 36 48" aria-label="좌표축">
      <path d="M9 27V10" stroke="#1830d8" strokeWidth="2" />
      <path d="m9 6-3 7h6z" fill="#1830d8" />
      <path d="m9 27 11-6" stroke="#20c040" strokeWidth="2" />
      <path d="m25 18-7 1 3 5z" fill="#20e050" />
      <path d="m9 27 11 5" stroke="#e02020" strokeWidth="2" />
      <path d="m26 35-8-1 3-5z" fill="#e02020" />
      <circle cx="9" cy="27" r="2.5" fill="#e8d020" stroke="#776010" />
      <text x="9" y="6" fontSize="7" fill="#1830d8">Z</text>
      <text x="27" y="16" fontSize="7" fill="#20c0a0">Y</text>
      <text x="27" y="37" fontSize="7" fill="#e02020">X</text>
    </svg>
  );
}

function ViewToolbar() {
  return (
    <div className="relative flex h-[24px] items-center justify-center gap-px pl-[10px] text-[7px] text-[#444]">
      <Tool name="선택" active><Glyph name="selectBox" /></Tool>
      <Tool name="요소 선택"><Glyph name="pick" /></Tool>
      <span className="mx-[2px]"><Sep /></span>
      <Tool name="채우기"><Glyph name="pour" /></Tool>
      <Caret />
      <span className="mx-[3px]"><Sep /></span>
      <div className="relative w-[70px]">
        <select aria-label="선택 필터" className="block h-[12px] w-full appearance-none bg-white pl-[3px] text-[7px]">
          <option>없음 (O)</option>
        </select>
        <span className="pointer-events-none absolute right-0 top-0 flex h-[12px] w-[8px] items-center justify-center bg-[#b7bbc3]"><Caret /></span>
      </div>
      <div className="relative ml-[3px] w-[72px]">
        <select aria-label="대상" className="block h-[12px] w-full appearance-none border border-[#c4c4c4] bg-[#f1f1f1]">
          <option></option>
        </select>
        <span className="pointer-events-none absolute right-[3px] top-[5px]"><Caret /></span>
      </div>
      <span className="mx-[2px]"><Sep /></span>
      <Tool name="다각형 선택"><Glyph name="cursor" /></Tool>
      <Tool name="다각형 해제"><Glyph name="cursor" /></Tool>
      <Tool name="방향"><svg width="6" height="6" viewBox="0 0 6 6"><path d="m0 1 6 3v1H0z" fill="#777" /></svg></Tool>
      <span className="mx-[2px]"><Sep /></span>
      <Tool name="연결 해제"><Glyph name="links" /></Tool>
      <Tool name="프레임"><Glyph name="frames" /></Tool>
      <span className="mx-[2px]"><Sep /></span>
      <Tool name="점 선택"><Glyph name="circleCursor" /></Tool>
      <Tool name="점 해제"><Glyph name="circleCursor" /></Tool>
      <span className="mx-[2px]"><Sep /></span>
      <Tool name="서식"><Glyph name="brush" /></Tool>
    </div>
  );
}

function Viewport() {
  return (
    <div className="relative min-h-0 flex-1 overflow-hidden border-b border-l border-t border-[#8a8a8a] bg-white">
      <JettyModel />
      <ViewToolbar />
      <div className="absolute left-[10px] top-[5px] w-[88px] text-[7px] text-[#aaa]">
        <div className="flex items-center gap-px leading-[7px]">
          <span className="flex h-[5px] w-[69px] border border-[#b5b5b5]">
            <span className="h-[2px] w-1/2 bg-[#aaa]" />
            <span className="mt-[1px] h-[2px] w-1/2 bg-[#aaa]" />
          </span>
          mm
        </div>
        <div className="mt-[2px] flex justify-between">
          <span>0</span>
          <span className="pl-[11px]">5.32e+003</span>
          <span>1.06e+004</span>
        </div>
      </div>
      <p className="absolute right-[8px] top-[8px] flex items-center text-[8px] font-bold leading-[9px] text-[#d8d8d8]">
        <svg width="10" height="6" viewBox="0 0 10 6"><path d="M3 0h7L8 2H5L2 6H0z" fill="#d0d0d0" /></svg>
        <span className="text-[5px]">midas</span>&nbsp;FEA NX
      </p>
      <Legend />
      <p className="absolute bottom-[5px] left-[6px] whitespace-pre font-['Liberation_Sans','Noto_Sans_CJK_KR',sans-serif] text-[7px] leading-[10px] text-[#111]">
        [ DATA ] Eigen Value,  고유치해석,  MODE 1 (FREQ=1.3022e-01),  [ UNIT ]   N,  mm,  [ Output CSys ] 기본값
      </p>
      <AxisTriad />
    </div>
  );
}

function PlayerBar() {
  return (
    <div className="flex h-[14px] shrink-0 items-center gap-px bg-gradient-to-b from-[#cfd3da] to-[#aeb3bc] pl-[6px]">
      <Tool name="재생"><svg width="6" height="6" viewBox="0 0 6 6"><path d="m1 0 4 3-4 3z" fill="#111" /></svg></Tool>
      <Tool name="정지"><span className="size-[5px] bg-[#222]" /></Tool>
      <span className="mx-[2px]"><Sep /></span>
      <Tool name="저장"><Save size={10} color="#5c6068" /></Tool>
      <Tool name="녹화"><Glyph name="record" /></Tool>
      <Tool name="파형"><Glyph name="wave" /></Tool>
      <Tool name="내려받기"><Glyph name="download" /></Tool>
      <Sep />
      <div className="relative ml-px w-[83px] shrink-0">
        <select aria-label="레벨" className="block h-[12px] w-full appearance-none bg-white pl-[3px] text-[7px] text-[#333]">
          <option>레벨 3 (보통)</option>
        </select>
        <span className="pointer-events-none absolute right-0 top-0 flex h-[12px] w-[8px] items-center justify-center bg-[#b7bbc3]"><Caret /></span>
      </div>
      <input
        type="range"
        aria-label="프레임 위치"
        defaultValue={0}
        className="ml-px h-[12px] min-w-0 flex-1 appearance-none bg-[#f2f2f2] pl-[3px] [&::-webkit-slider-thumb]:h-[8px] [&::-webkit-slider-thumb]:w-[5px] [&::-webkit-slider-thumb]:appearance-none [&::-webkit-slider-thumb]:rounded-b-[2px] [&::-webkit-slider-thumb]:bg-[#0a74d4]"
      />
    </div>
  );
}

function FileTabs() {
  return (
    <div className="flex h-[15px] shrink-0 items-start bg-gradient-to-b from-[#b9bdc6] to-[#8d929d] pl-1 text-[7px]">
      <button aria-label="이전" className="mt-[5px]">
        <svg width="4" height="6" viewBox="0 0 4 6"><path d="M3.5.5v5L.5 3z" fill="none" stroke="#666" /></svg>
      </button>
      <svg width="14" height="12" viewBox="0 0 14 12" className="ml-px"><path d="M0 0h14v12C6 12 6 3 0 0z" fill="#fff" /></svg>
      <div className="flex h-[12px] items-center gap-1 bg-white pr-[3px] font-['Liberation_Sans',sans-serif]">
        <Glyph name="doc" />
        <a href="#jetty" className="font-bold text-[#222]">Jetty_FEA NX.fea</a>
        <button aria-label="탭 닫기"><X size={7} color="#444" /></button>
      </div>
    </div>
  );
}

const menu = ["형상", "요소망", "정적 해석", "동적 해석", "해석", "결과분석", "도구"];

function TitleBar() {
  return (
    <header>
      <div className="relative flex h-[20px] items-center rounded-tl-[10px] bg-gradient-to-b from-[#9b9ca3] to-[#8e8e8e] pt-[3px]">
        <div className="ml-[24px] flex h-[12px] w-[127px] items-center gap-px rounded-r-full border border-[#b2b2b2] bg-[#999] pl-[7px]">
          <Tool name="새 파일"><File size={9} fill="#fff" color="#666" /></Tool>
          <Tool name="열기"><FolderOpen size={10} fill="#f5c66a" color="#9c6c20" /></Tool>
          <Tool name="저장"><Save size={9} fill="#dfe8f4" color="#2c4470" /></Tool>
          <Tool name="가져오기"><FolderOpen size={10} fill="#f0b040" color="#9c6c20" /></Tool>
          <Tool name="내보내기"><FolderOpen size={10} fill="#f0b040" color="#9c6c20" /></Tool>
          <Tool name="실행 취소"><Undo2 size={8} color="#6c747f" /></Tool>
          <Tool name="취소 목록"><Caret className="text-[#7c828a]" /></Tool>
          <Tool name="다시 실행"><Redo2 size={8} color="#6c747f" /></Tool>
          <Tool name="실행 목록"><Caret className="text-[#7c828a]" /></Tool>
        </div>
        <span className="ml-1"><Caret className="text-[#ddd]" /></span>
        <h1 className="absolute inset-x-0 pl-[131px] text-center text-[7px] text-[#e8e8e8]">FEA NX - [Jetty_FEA NX.fea]</h1>
        <button aria-label="최소화" className="absolute right-[21px] top-[12px] h-px w-[4px] bg-[#444]" />
        <button aria-label="최대화" className="absolute right-0 top-[10px] h-[4px] w-[5px] border border-[#555]" />
      </div>
      <nav className="flex h-[13px] items-end bg-[#535353] pl-[30px] text-[7px] leading-[12px] text-[#e4e4e4]">
        {menu.map((item) => (
          <a
            key={item}
            href="#ribbon"
            className={item === "결과분석" ? "ml-[2px] rounded-t-[2px] bg-[#eef0f3] px-[8px] text-[#333]" : "px-[8px]"}
          >
            {item}
          </a>
        ))}
        <div className="ml-auto flex h-full items-center gap-[4px] pr-[8px]">
          {["스타일", "배경", "언어"].map((item) => (
            <button key={item} className="flex items-center gap-[5px]">
              {item}
              <Caret className="text-[#bbb]" />
            </button>
          ))}
          <button aria-label="도움말" className="flex size-[8px] items-center justify-center rounded-full bg-[#2c5ce0] text-[6px] font-bold leading-none text-white">?</button>
        </div>
      </nav>
      <svg className="absolute left-[5px] top-[4px]" width="24" height="24" viewBox="0 0 24 24" aria-label="FEA NX">
        <circle cx="12" cy="12" r="11" fill="#e4e4e6" stroke="#777" />
        <path d="M1 12a11 11 0 0 1 22 0z" fill="#f6f6f7" />
        <path d="M9 4h11l-2 4h-5q-2 0-3 2l-3 5H4l3-8q1-3 2-3z" fill="#e02818" />
        <path d="M13 9h5l-3 4h-3l-3 4H7z" fill="#10a0b0" />
        <text x="9" y="19" fontSize="6" fontWeight="bold" fill="#d84820">NX</text>
      </svg>
    </header>
  );
}

const App = () => (
  <div className="relative flex h-screen flex-col overflow-hidden bg-white font-['Noto_Sans','Noto_Sans_CJK_KR',sans-serif]">
    <TitleBar />
    <div className="flex min-h-0 flex-1">
      <div className="w-[5px] shrink-0 border-r border-[#6b6b6b] bg-[#999]" />
      <div className="flex min-w-0 flex-1 flex-col">
        <Ribbon />
        <ToolStrips />
        <div className="flex min-h-0 flex-1 bg-[#535353]">
          <aside className="mr-[2px] flex w-[181px] shrink-0 flex-col">
            <ResultTree />
            <nav className="flex h-[15px] items-start gap-[2px] pl-px text-[7px] leading-[12px] text-white">
              <a href="#model" className="px-[3px]">모델</a>
              <a href="#analysis" className="px-[3px]">해석</a>
              <a href="#result" className="rounded-b-[2px] bg-[#e8edf4] px-[2px] text-[#333]">결과</a>
            </nav>
            <Properties />
          </aside>
          <main className="flex min-w-0 flex-1 flex-col border-l border-[#ddd]">
            <div className="flex min-h-0 flex-1 flex-col bg-[#e8e8e8] pl-px">
              <Viewport />
            </div>
            <PlayerBar />
            <FileTabs />
            <section className="mt-[2px] flex h-[49px] shrink-0 flex-col bg-white">
              <PaneHeader title="출력창" />
              <div className="pl-px pt-[2px] font-['DejaVu_Sans_Condensed','DejaVu_Sans',sans-serif] text-[7px] leading-[9px] text-[#333]">
                <p>&gt; FEA NX 2023R1(v340) (64bit)</p>
                <p>&gt; Copyright (C) SINCE 1989 MIDAS Information Technology Co., Ltd. ALL RIGHTS RESERVED.</p>
              </div>
            </section>
          </main>
        </div>
      </div>
    </div>
  </div>
);

export default App;
